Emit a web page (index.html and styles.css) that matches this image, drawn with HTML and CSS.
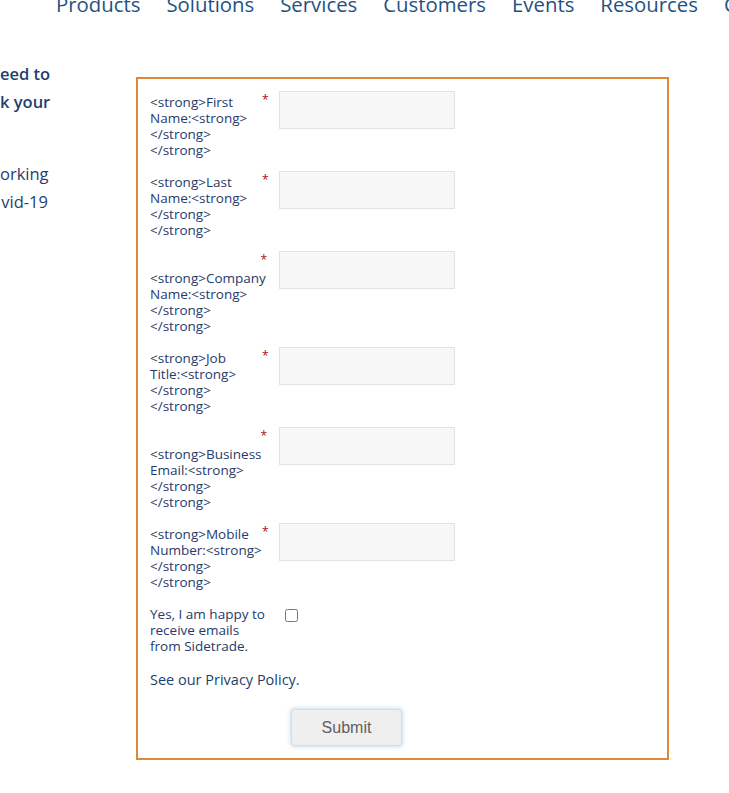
FILE: index.html
```html
<!DOCTYPE html>
<html lang="en">
<head>
<meta charset="utf-8">
<title>Sidetrade – Contact form</title>
<link rel="stylesheet" href="styles.css">
</head>
<body>
<header class="topnav">
  <a class="nav-item" href="#">Products</a>
  <a class="nav-item" href="#">Solutions</a>
  <a class="nav-item" href="#">Services</a>
  <a class="nav-item" href="#">Customers</a>
  <a class="nav-item" href="#">Events</a>
  <a class="nav-item" href="#">Resources</a>
  <a class="nav-item" href="#">C</a>
</header>
<main class="page">
  <section class="intro">
    <div class="intro-head">
      <div class="intro-line">eed to</div>
      <div class="intro-line">k your</div>
    </div>
    <div class="intro-body">
      <div class="intro-line">orking</div>
      <div class="intro-line">vid-19</div>
    </div>
  </section>
  <form class="form-box">
    <div class="row">
      <label class="label"><span class="req">*</span>&lt;strong&gt;First<br>Name:&lt;strong&gt;<br>&lt;/strong&gt;<br>&lt;/strong&gt;</label>
      <input class="field" type="text">
    </div>
    <div class="row">
      <label class="label"><span class="req">*</span>&lt;strong&gt;Last<br>Name:&lt;strong&gt;<br>&lt;/strong&gt;<br>&lt;/strong&gt;</label>
      <input class="field" type="text">
    </div>
    <div class="row">
      <label class="label"><span class="req req-line">*</span>&lt;strong&gt;Company<br>Name:&lt;strong&gt;<br>&lt;/strong&gt;<br>&lt;/strong&gt;</label>
      <input class="field" type="text">
    </div>
    <div class="row">
      <label class="label"><span class="req">*</span>&lt;strong&gt;Job<br>Title:&lt;strong&gt;<br>&lt;/strong&gt;<br>&lt;/strong&gt;</label>
      <input class="field" type="text">
    </div>
    <div class="row">
      <label class="label"><span class="req req-line">*</span>&lt;strong&gt;Business<br>Email:&lt;strong&gt;<br>&lt;/strong&gt;<br>&lt;/strong&gt;</label>
      <input class="field" type="text">
    </div>
    <div class="row">
      <label class="label"><span class="req">*</span>&lt;strong&gt;Mobile<br>Number:&lt;strong&gt;<br>&lt;/strong&gt;<br>&lt;/strong&gt;</label>
      <input class="field" type="text">
    </div>
    <div class="row row-check">
      <label class="label">Yes, I am happy to<br>receive emails<br>from Sidetrade.</label>
      <input class="check" type="checkbox">
    </div>
    <p class="privacy">See our Privacy Policy.</p>
    <button class="submit" type="button">Submit</button>
  </form>
</main>
</body>
</html>
```
FILE: styles.css
```css
html, body {
  margin: 0;
  padding: 0;
  background: #ffffff;
  overflow: hidden;
}

body {
  font-family: "Open Sans", "Liberation Sans", sans-serif;
  color: #263a6d;
}

.topnav {
  display: flex;
  gap: 26px;
  padding-left: 56px;
  margin-top: -9px;
  height: 27px;
  white-space: nowrap;
}

.nav-item {
  font-size: 20.35px;
  line-height: 27px;
  color: #1f5282;
  text-decoration: none;
}

.page {
  display: flex;
  align-items: flex-start;
  gap: 87px;
  margin-top: 42px;
}

.intro {
  width: 48px;
  flex: none;
  text-align: right;
  font-size: 16.5px;
  line-height: 28px;
  color: #1e3f6e;
  white-space: nowrap;
  margin-right: 1px;
}

.intro-head {
  font-weight: 600;
  margin-bottom: 44px;
}

.form-box {
  margin: 17px 0 0;
  width: 505px;
  border: 2px solid #e0883a;
  padding: 12px;
  flex: none;
}

.row {
  display: flex;
  align-items: flex-start;
  margin-bottom: 13px;
}

.label {
  width: 129px;
  flex: none;
  padding-top: 3px;
  font-size: 13.5px;
  line-height: 16px;
  color: #263a6d;
  white-space: nowrap;
}

.req {
  float: right;
  width: 17px;
  color: #a3161b;
  font-size: 12px;
  line-height: 12px;
  text-align: left;
}

.req-line {
  float: none;
  display: block;
  width: auto;
  height: 16px;
  text-align: right;
  padding-right: 12px;
}

.field {
  width: 176px;
  height: 38px;
  box-sizing: border-box;
  margin: 0;
  background: #f7f7f7;
  border: 1px solid #e2e2e2;
  border-radius: 0;
}

.row-check {
  margin-bottom: 0;
}

.check {
  width: 13px;
  height: 13px;
  margin: 6px 0 0 6px;
}

.privacy {
  margin: 17px 0 0;
  font-size: 14.5px;
  line-height: 18px;
  color: #1e3f6e;
}

.submit {
  display: block;
  margin: 20px 0 0 141px;
  width: 111px;
  height: 37px;
  background: #efefef;
  border: 1px solid #dcdcdc;
  border-radius: 3px;
  box-shadow: 0 0 5px rgba(120, 170, 225, 0.55);
  font-family: "Liberation Sans", Arial, sans-serif;
  font-size: 16px;
  color: #606060;
}
```
